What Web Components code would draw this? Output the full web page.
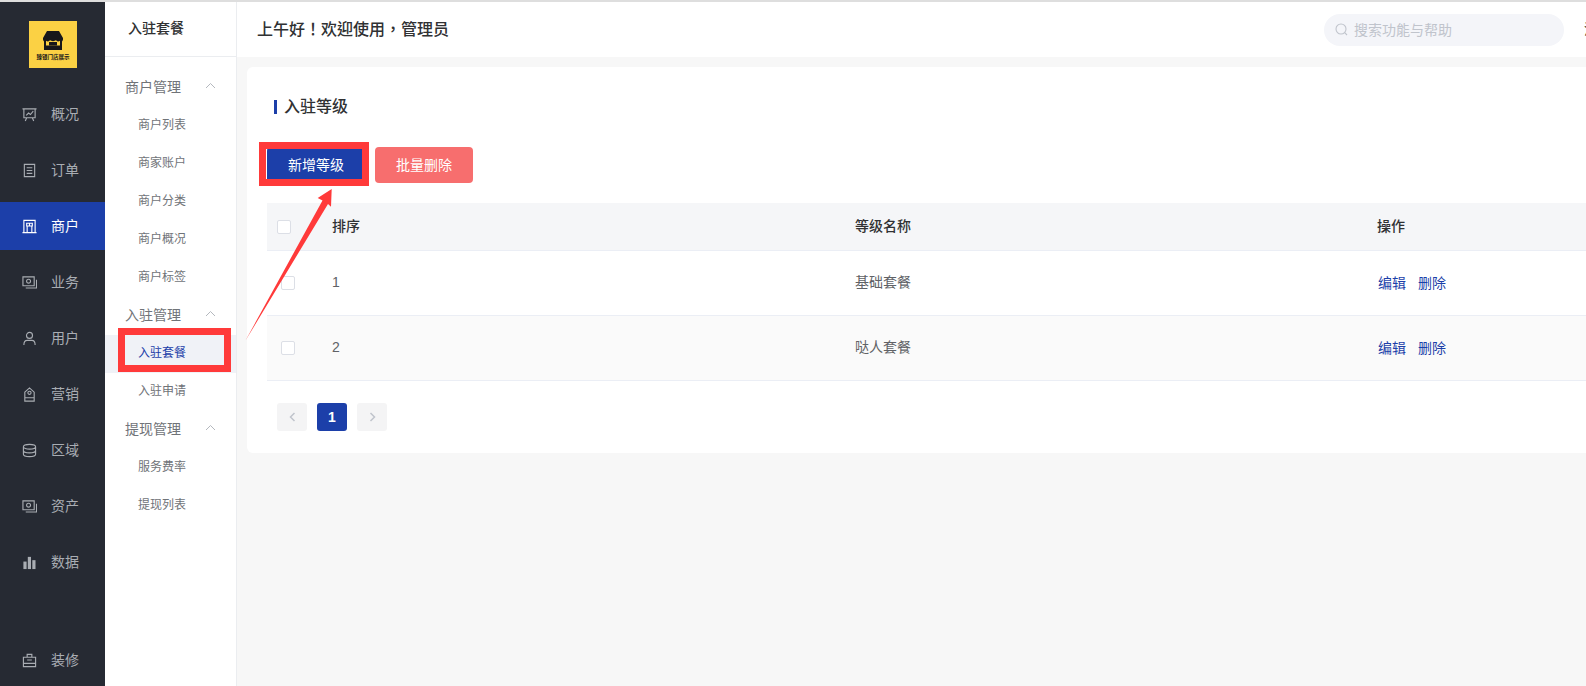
<!DOCTYPE html>
<html lang="zh-CN">
<head>
<meta charset="utf-8">
<title>入驻等级</title>
<style>
  html, body { margin: 0; height: 100%; overflow: hidden; }
  body { font-family: "Liberation Sans", "Noto Sans CJK SC", sans-serif; color: #303133; background: #f7f7f7; }
</style>
</head>
<body>
<admin-page>
  <rail-nav slot="rail">
    <rail-item icon="chart">概况</rail-item>
    <rail-item icon="doc">订单</rail-item>
    <rail-item icon="building" active>商户</rail-item>
    <rail-item icon="cash">业务</rail-item>
    <rail-item icon="user">用户</rail-item>
    <rail-item icon="tag">营销</rail-item>
    <rail-item icon="db">区域</rail-item>
    <rail-item icon="cash">资产</rail-item>
    <rail-item icon="bars">数据</rail-item>
    <rail-item icon="bag" slot="bottom">装修</rail-item>
  </rail-nav>
  <sub-menu slot="menu" heading="入驻套餐">
    <menu-group>商户管理</menu-group>
    <menu-link>商户列表</menu-link>
    <menu-link>商家账户</menu-link>
    <menu-link>商户分类</menu-link>
    <menu-link>商户概况</menu-link>
    <menu-link>商户标签</menu-link>
    <menu-group>入驻管理</menu-group>
    <menu-link active>入驻套餐</menu-link>
    <menu-link>入驻申请</menu-link>
    <menu-group>提现管理</menu-group>
    <menu-link>服务费率</menu-link>
    <menu-link>提现列表</menu-link>
  </sub-menu>
  <top-bar slot="top" lang="zh-TW">上午好！欢迎使用，管理员</top-bar>
  <level-card slot="main" heading="入驻等级">
    <level-table></level-table>
    <page-nav></page-nav>
  </level-card>
  <red-marks slot="marks"></red-marks>
</admin-page>

<script>
const railIcons = {
  chart: '<path d="M.5 2h15M2 2v9.500h12V2M4.500 9l2.500-2.500 2 1.500 3-3.500M5 11.500l-1.500 3.500M11 11.500l1.500 3.500"/>',
  doc: '<path d="M2.500 1.500h11v13h-11zM5 5h6M5 8h6M5 11h6"/>',
  building: '<path d="M2 1.500h12v13H2zM.5 14.500h15M5 4.500h6v3H5zM8 4.500v3M5.500 7.500v7M10.500 7.500v7"/>',
  cash: '<path d="M1 2h12v9.500H1zM4 13.800h11.500V5M7 4.500a2 2 0 1 0 0 4.200 2 2 0 0 0 0-4.200z"/>',
  user: '<path d="M8 1.500a3.200 3.200 0 1 0 0 6.400 3.200 3.200 0 0 0 0-6.400zM2 15c0-3.500 2-5 3.500-5M14 15c0-3.500-2-5-3.500-5M5.500 10h5"/>',
  tag: '<path d="M3 5.500 8 1l5 4.500v9.500H3zM3 11.500h10M8 4.500a1.700 1.700 0 1 0 0 3.400 1.700 1.700 0 0 0 0-3.400z"/>',
  db: '<path d="M1.500 4c0-3.400 13-3.400 13 0s-13 3.400-13 0zM1.500 4v8c0 3.400 13 3.400 13 0V4M1.500 8c0 3.400 13 3.400 13 0"/>',
  bars: '<g fill="currentColor" stroke="none"><rect x="1.500" y="7" width="3.400" height="8"/><rect x="6.200" y="2" width="3.400" height="13"/><rect x="11" y="5.500" width="3.400" height="9.500"/></g>',
  bag: '<path d="M1.500 4.500h13v10h-13zM5.500 4.500V1.500h5v3M1.500 11h13M5.500 7.500h5"/>'
};

class AdminPage extends HTMLElement {
  constructor() {
    super();
    this.attachShadow({ mode: 'open' });
    this.shadowRoot.innerHTML = `
      <style>
        :host { display: block; position: relative; width: 1586px; height: 686px; overflow: hidden; background: #f7f7f7; }
        .strip { height: 2px; background: #dedede; }
        .shell { display: grid; grid-template-columns: 105px 132px 1fr; height: 684px; }
        .content { display: flex; flex-direction: column; min-width: 0; overflow: hidden; }
      </style>
      <div class="strip"></div>
      <div class="shell">
        <slot name="rail"></slot>
        <slot name="menu"></slot>
        <div class="content">
          <slot name="top"></slot>
          <slot name="main"></slot>
        </div>
      </div>
      <slot name="marks"></slot>
    `;
  }
}

class RailNav extends HTMLElement {
  constructor() {
    super();
    this.attachShadow({ mode: 'open' });
    this.shadowRoot.innerHTML = `
      <style>
        :host { display: flex; flex-direction: column; background: #262a33; height: 684px; box-sizing: border-box; padding-bottom: 2px; }
        .logo { flex: none; width: 48px; height: 47px; margin: 19px 0 22px 29px; background: #fbd144; display: flex; flex-direction: column; align-items: center; color: #17171a; }
        .logo svg { display: block; margin-top: 10px; }
        .logo span { font-size: 5.5px; line-height: 7px; margin-top: 4px; font-weight: 700; white-space: nowrap; }
        .list { display: flex; flex-direction: column; gap: 8px; flex: 1; }
      </style>
      <div class="logo">
        <svg width="20" height="19" viewBox="0 0 20 19"><path fill="#17171a" d="M4 0h12l4 7v1.500a3 3 0 0 1-1 2V19H1v-8.500a3 3 0 0 1-1-2V7z"/><path fill="#fbd144" d="M3 9.800c2 1.400 3.500.4 4-.8 1 1.500 5 1.500 6 0 .5 1.200 2 2.200 4 .8V14.500H3z"/><path fill="#17171a" d="M6 11h8v3.500H6z"/></svg>
        <span>臻银门店展示</span>
      </div>
      <div class="list"><slot></slot></div>
      <slot name="bottom"></slot>
    `;
  }
}

class RailItem extends HTMLElement {
  constructor() {
    super();
    this.attachShadow({ mode: 'open' });
  }
  connectedCallback() {
    const icon = railIcons[this.getAttribute('icon')] || '';
    this.shadowRoot.innerHTML = `
      <style>
        :host { display: flex; align-items: center; gap: 14px; height: 48px; padding-left: 22px; font-size: 14px; color: #a9adb3; flex: none; }
        :host([active]) { background: #1c3fa9; color: #fff; }
        svg { flex: none; display: block; }
        .label { padding-bottom: 2px; }
      </style>
      <svg width="15" height="15" viewBox="0 0 16 16" fill="none" stroke="currentColor" stroke-width="1.200">${icon}</svg>
      <span class="label"><slot></slot></span>
    `;
  }
}

class SubMenu extends HTMLElement {
  constructor() {
    super();
    this.attachShadow({ mode: 'open' });
  }
  connectedCallback() {
    this.shadowRoot.innerHTML = `
      <style>
        :host { display: block; background: #fff; border-right: 1px solid #ebedf0; height: 684px; }
        .title { height: 54px; line-height: 52px; border-bottom: 1px solid #ebedf0; padding-left: 23px; font-size: 14px; font-weight: 500; color: #303133; }
        .list { padding-top: 12px; }
      </style>
      <div class="title">${this.getAttribute('heading')}</div>
      <div class="list"><slot></slot></div>
    `;
  }
}

class MenuGroup extends HTMLElement {
  constructor() {
    super();
    this.attachShadow({ mode: 'open' });
    this.shadowRoot.innerHTML = `
      <style>
        :host { display: flex; align-items: center; justify-content: space-between; height: 38px; box-sizing: border-box; padding: 0 20px 4px 20px; font-size: 14px; color: #707378; }
        svg { display: block; margin-top: -2px; }
      </style>
      <slot></slot>
      <svg width="11" height="7" viewBox="0 0 11 7" fill="none" stroke="#b4b8be" stroke-width="1"><path d="M1 6l4.500-4.500L10 6"/></svg>
    `;
  }
}

class MenuLink extends HTMLElement {
  constructor() {
    super();
    this.attachShadow({ mode: 'open' });
    this.shadowRoot.innerHTML = `
      <style>
        :host { display: flex; align-items: center; height: 38px; box-sizing: border-box; padding: 0 0 6px 33px; font-size: 12px; color: #707378; }
        :host([active]) { background: #f0f2f7; color: #1c3fa9; }
      </style>
      <slot></slot>
    `;
  }
}

class TopBar extends HTMLElement {
  constructor() {
    super();
    this.attachShadow({ mode: 'open' });
    this.shadowRoot.innerHTML = `
      <style>
        :host { display: flex; align-items: center; flex: none; height: 55px; background: #fff; padding-left: 20px; }
        .hello { font-family: "Noto Sans CJK TC", sans-serif; font-size: 16px; font-weight: 500; color: #303133; flex: 1; white-space: nowrap; padding-bottom: 4px; }
        .search { flex: none; width: 240px; height: 32px; border-radius: 16px; background: #f4f5f9; display: flex; align-items: center; gap: 6px; padding: 0 0 0 11px; box-sizing: border-box; font-size: 14px; color: #c0c4cc; }
        .search span { padding-bottom: 2px; }
        svg { display: block; flex: none; }
        .more { flex: none; width: 2px; margin-left: 20px; overflow: hidden; white-space: nowrap; font-size: 14px; color: #303133; padding-bottom: 4px; }
      </style>
      <span class="hello"><slot></slot></span>
      <div class="search">
        <svg width="13" height="13" viewBox="0 0 13 13" fill="none" stroke="#c0c4cc" stroke-width="1.100"><circle cx="6" cy="6" r="5"/><path d="M9.700 9.700 12 12"/></svg>
        <span>搜索功能与帮助</span>
      </div>
      <span class="more">消息</span>
    `;
  }
}

class LevelCard extends HTMLElement {
  constructor() {
    super();
    this.attachShadow({ mode: 'open' });
  }
  connectedCallback() {
    this.shadowRoot.innerHTML = `
      <style>
        :host { display: block; width: 1500px; margin: 10px 0 0 10px; padding: 28px 0 22px 20px; box-sizing: border-box; background: #fff; border-radius: 6px; }
        .title { display: flex; align-items: center; height: 24px; padding-left: 7px; gap: 7px; font-size: 16px; font-weight: 500; color: #303133; }
        .title i { width: 3px; height: 14px; background: #1c3fa9; }
        .title span { padding-bottom: 4px; }
        .actions { display: flex; gap: 10px; margin: 28px 0 20px; }
        button { width: 98px; height: 36px; border: 0; border-radius: 4px; color: #fff; font: inherit; font-size: 14px; font-weight: 400; padding: 0 0 2px; }
        .add { background: #1c3fa9; }
        .del { background: #f76e6e; }
      </style>
      <div class="title"><i></i><span>${this.getAttribute('heading')}</span></div>
      <div class="actions"><button class="add">新增等级</button><button class="del">批量删除</button></div>
      <slot></slot>
    `;
  }
}

class LevelTable extends HTMLElement {
  constructor() {
    super();
    this.attachShadow({ mode: 'open' });
    const rows = [['1', '基础套餐'], ['2', '哒人套餐']];
    this.shadowRoot.innerHTML = `
      <style>
        :host { display: block; font-size: 14px; color: #606266; }
        .row { display: grid; grid-template-columns: 65px 523px 522px 1fr; align-items: center; height: 65px; box-sizing: border-box; border-bottom: 1px solid #ebeef5; }
        .row.alt { background: #fafafa; }
        .row.head { height: 48px; background: #f5f6f8; color: #303133; font-weight: 500; }
        .t { padding-bottom: 4px; }
        .box { display: block; width: 14px; height: 14px; box-sizing: border-box; border: 1px solid #dcdfe6; border-radius: 2px; background: #fff; margin-left: 14px; }
        .head .box { margin-left: 10px; }
        .ops { display: flex; gap: 12px; color: #1c3fa9; padding: 0 0 2px 1px; }
        .num { font-family: "Liberation Sans", sans-serif; padding-bottom: 2px; }
      </style>
      <div class="row head"><span class="box"></span><span class="t">排序</span><span class="t">等级名称</span><span class="t">操作</span></div>
      ${rows.map((r, i) => `
        <div class="row ${i % 2 ? 'alt' : ''}">
          <span class="box"></span><span class="num">${r[0]}</span><span class="t">${r[1]}</span>
          <span class="ops"><span>编辑</span><span>删除</span></span>
        </div>`).join('')}
    `;
  }
}

class PageNav extends HTMLElement {
  constructor() {
    super();
    this.attachShadow({ mode: 'open' });
    this.shadowRoot.innerHTML = `
      <style>
        :host { display: flex; gap: 10px; margin: 22px 0 0 10px; }
        div { width: 30px; height: 28px; border-radius: 3px; background: #f4f4f5; display: flex; align-items: center; justify-content: center; color: #c0c4cc; }
        .on { background: #1c3fa9; color: #fff; font-size: 14px; font-weight: 700; }
      </style>
      <div><svg width="7" height="10" viewBox="0 0 7 10" fill="none" stroke="currentColor" stroke-width="1.500"><path d="M5.500 1 1.500 5l4 4"/></svg></div>
      <div class="on">1</div>
      <div><svg width="7" height="10" viewBox="0 0 7 10" fill="none" stroke="currentColor" stroke-width="1.500"><path d="M1.500 1l4 4-4 4"/></svg></div>
    `;
  }
}

// the red boxes and arrow drawn on top of the screenshot
class RedMarks extends HTMLElement {
  constructor() {
    super();
    this.attachShadow({ mode: 'open' });
    this.shadowRoot.innerHTML = `
      <style>
        :host { position: absolute; inset: 0; pointer-events: none; display: block; }
        .box { position: absolute; box-sizing: border-box; border: 7px solid #ff3a3a; }
        svg { position: absolute; left: 0; top: 0; }
      </style>
      <div class="box" style="left:118px;top:328px;width:113px;height:44px"></div>
      <div class="box" style="left:259px;top:142px;width:110px;height:44px"></div>
      <svg width="400" height="400"><polygon fill="#ff3a3a" points="245.500,340.500 322.500,200.500 317.700,198 331.700,189 331,206.700 328,204"/></svg>
    `;
  }
}

customElements.define('admin-page', AdminPage);
customElements.define('rail-nav', RailNav);
customElements.define('rail-item', RailItem);
customElements.define('sub-menu', SubMenu);
customElements.define('menu-group', MenuGroup);
customElements.define('menu-link', MenuLink);
customElements.define('top-bar', TopBar);
customElements.define('level-card', LevelCard);
customElements.define('level-table', LevelTable);
customElements.define('page-nav', PageNav);
customElements.define('red-marks', RedMarks);
</script>
</body>
</html>
